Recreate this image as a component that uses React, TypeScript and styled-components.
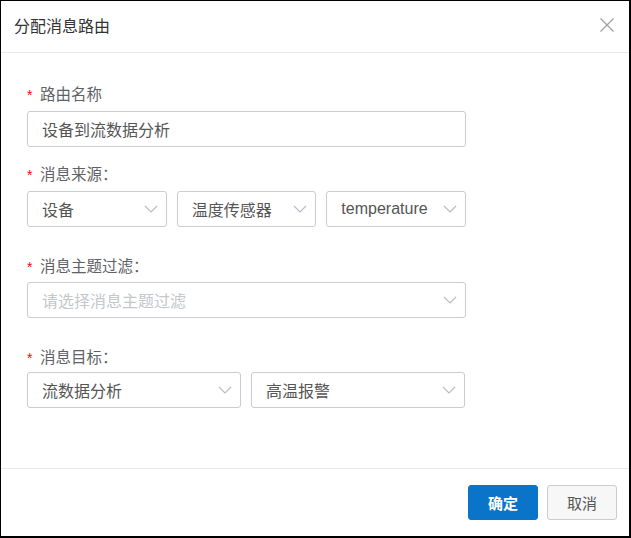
import React from "react";
import styled, { createGlobalStyle } from "styled-components";

const GlobalStyle = createGlobalStyle`
  html, body {
    margin: 0;
    padding: 0;
    background: #ffffff;
  }
  body {
    font-family: "Liberation Sans", "Noto Sans CJK SC", sans-serif;
  }
`;

const Dialog = styled.div`
  width: 631px;
  height: 538px;
  box-sizing: border-box;
  border-top: 1px solid #000;
  border-left: 1px solid #000;
  border-right: 2px solid #000;
  border-bottom: 2px solid #000;
  background: #fff;
  display: flex;
  flex-direction: column;
`;

const Header = styled.div`
  height: 51px;
  display: flex;
  align-items: center;
  justify-content: space-between;
  padding: 0 14px 0 13px;
  border-bottom: 1px solid #e8e8e8;
  flex-shrink: 0;
`;

const Title = styled.div`
  font-size: 16px;
  color: #333;
  margin-top: -4px;
`;

const CloseButton = styled.button`
  border: none;
  background: none;
  padding: 0;
  width: 16px;
  height: 16px;
  display: flex;
  cursor: pointer;
  margin-top: -4px;
`;

const Body = styled.div`
  flex: 1;
  padding: 32px 0 0 26px;
  width: 439px;
`;

const FormItem = styled.div<{ $gap: number }>`
  margin-bottom: ${(p) => p.$gap}px;
`;

const Label = styled.div<{ $below: number }>`
  font-size: 15.5px;
  line-height: 20px;
  color: #606266;
  margin-bottom: ${(p) => p.$below}px;
  display: flex;
  align-items: center;
`;

const Star = styled.span`
  color: #f00;
  font-size: 14px;
  width: 13px;
`;

const Row = styled.div`
  display: flex;
  gap: 10px;
`;

const Field = styled.div<{ $w: number }>`
  width: ${(p) => p.$w}px;
  height: 36px;
  box-sizing: border-box;
  border: 1px solid #c8ccd4;
  border-radius: 3px;
  display: flex;
  align-items: center;
  padding: 0 7px 0 14px;
  font-size: 16px;
  color: #555;
`;

const FieldText = styled.span<{ $placeholder?: boolean }>`
  flex: 1;
  color: ${(p) => (p.$placeholder ? "#c4c7cc" : "#555")};
  white-space: nowrap;
`;

const Footer = styled.div`
  height: 67px;
  border-top: 1px solid #e8e8e8;
  display: flex;
  align-items: center;
  justify-content: flex-end;
  gap: 9px;
  padding: 0 12px 0 0;
  flex-shrink: 0;
`;

const Button = styled.button<{ $primary?: boolean }>`
  width: 70px;
  height: 35px;
  border-radius: 3px;
  font-size: 15px;
  font-family: inherit;
  cursor: pointer;
  border: 1px solid ${(p) => (p.$primary ? "#0a74c8" : "#ccc")};
  background: ${(p) => (p.$primary ? "#0a74c8" : "#f7f7f7")};
  color: ${(p) => (p.$primary ? "#fff" : "#555")};
  font-weight: ${(p) => (p.$primary ? 600 : 400)};
`;

const Chevron = () => (
  <svg width="16" height="10" viewBox="0 0 16 10">
    <path d="M2 2 L8 8 L14 2" fill="none" stroke="#b8bcc4" strokeWidth="1.2" />
  </svg>
);

const Select = ({ w, text, placeholder }: { w: number; text: string; placeholder?: boolean }) => (
  <Field $w={w}>
    <FieldText $placeholder={placeholder}>{text}</FieldText>
    <Chevron />
  </Field>
);

export default function App() {
  return (
    <>
      <GlobalStyle />
      <Dialog>
        <Header>
          <Title>分配消息路由</Title>
          <CloseButton aria-label="关闭">
            <svg width="16" height="16" viewBox="0 0 16 16">
              <path d="M1.5 1.5 L14.5 14.5 M14.5 1.5 L1.5 14.5" stroke="#a0a0a0" strokeWidth="1.3" />
            </svg>
          </CloseButton>
        </Header>
        <Body>
          <FormItem $gap={18}>
            <Label $below={6}>
              <Star>*</Star>路由名称
            </Label>
            <Field $w={439}>
              <FieldText>设备到流数据分析</FieldText>
            </Field>
          </FormItem>
          <FormItem $gap={30}>
            <Label $below={6}>
              <Star>*</Star>消息来源：
            </Label>
            <Row>
              <Select w={141} text="设备" />
              <Select w={141} text="温度传感器" />
              <Select w={141} text="temperature" />
            </Row>
          </FormItem>
          <FormItem $gap={30}>
            <Label $below={5}>
              <Star>*</Star>消息主题过滤：
            </Label>
            <Select w={439} text="请选择消息主题过滤" placeholder />
          </FormItem>
          <FormItem $gap={0}>
            <Label $below={4}>
              <Star>*</Star>消息目标：
            </Label>
            <Row>
              <Select w={214} text="流数据分析" />
              <Select w={214} text="高温报警" />
            </Row>
          </FormItem>
        </Body>
        <Footer>
          <Button $primary>确定</Button>
          <Button>取消</Button>
        </Footer>
      </Dialog>
    </>
  );
}
